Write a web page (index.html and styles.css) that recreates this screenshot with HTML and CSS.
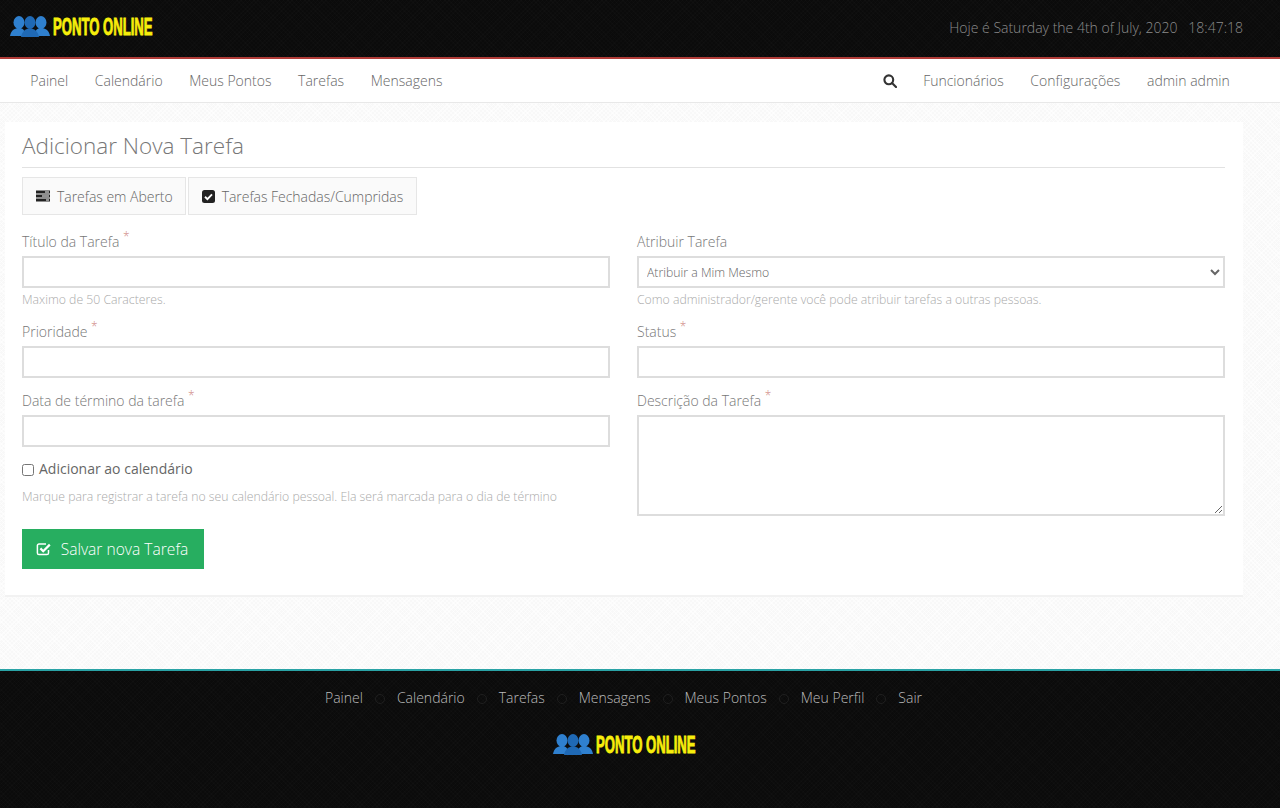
FILE: index.html
```html
<!DOCTYPE html>
<html>
<head>
  <meta charset="utf-8">
  <title>Ponto Online</title>
  <link rel="stylesheet" href="styles.css">
</head>
<body>
  <div class="topbar">
    <a class="logo" href="#">
      <svg class="logo-icon" viewBox="0 0 40 22" width="40" height="22">
        <g fill="#2f80cf">
          <ellipse cx="9" cy="6.5" rx="5.5" ry="6.5"/>
          <ellipse cx="31" cy="6.5" rx="5.5" ry="6.5"/>
          <path d="M0 20 C1 14 5 12 9 12 C13 12 15 14 15 20 Z"/>
          <path d="M25 20 C25 14 27 12 31 12 C35 12 39 14 40 20 Z"/>
        </g>
        <g fill="#1f69b5">
          <ellipse cx="20" cy="6.5" rx="5.5" ry="6.5"/>
          <path d="M11 21 C12 15 16 12.5 20 12.5 C24 12.5 28 15 29 21 Z"/>
        </g>
      </svg>
      <span class="logo-text">PONTO ONLINE</span>
    </a>
    <div class="clock">Hoje é Saturday the 4th of July, 2020 &nbsp; 18:47:18</div>
  </div>

  <div class="navbar">
    <div class="nav-links">
      <a href="#">Painel</a>
      <a href="#">Calendário</a>
      <a href="#">Meus Pontos</a>
      <a href="#">Tarefas</a>
      <a href="#">Mensagens</a>
    </div>
    <div class="nav-links">
      <a href="#" class="nav-search">
        <svg viewBox="0 0 14 14" width="14" height="14" fill="none" stroke="#333" stroke-width="2.1">
          <circle cx="5.8" cy="5.8" r="4.4"/>
          <path d="M9 9l4 4" stroke-linecap="round"/>
        </svg>
      </a>
      <a href="#">Funcionários</a>
      <a href="#">Configurações</a>
      <a href="#">admin admin</a>
    </div>
  </div>

  <div class="main">
    <div class="card">
      <h1 class="card-title">Adicionar Nova Tarefa</h1>

      <div class="tabs">
        <a class="tab" href="#">
          <svg viewBox="0 0 14 12" width="14" height="12" fill="#222">
            <rect x="0" y="0.5" width="14" height="3"/>
            <rect x="0" y="4.5" width="14" height="3"/>
            <rect x="0" y="8.5" width="14" height="3"/>
            <rect x="9" y="1.5" width="4" height="1" fill="#fff"/>
            <rect x="6" y="5.5" width="7" height="1" fill="#fff"/>
            <rect x="10" y="9.5" width="3" height="1" fill="#fff"/>
          </svg>
          Tarefas em Aberto
        </a>
        <a class="tab" href="#">
          <svg viewBox="0 0 13 13" width="13" height="13">
            <rect width="13" height="13" rx="2.5" fill="#222"/>
            <path d="M3 6.8l2.4 2.3L10 4.4" fill="none" stroke="#fff" stroke-width="1.9"/>
          </svg>
          Tarefas Fechadas/Cumpridas
        </a>
      </div>

      <form class="form-grid">
        <div class="form-col">
          <div class="field field-first">
            <label>Título da Tarefa <sup>*</sup></label>
            <input type="text">
            <p class="help">Maximo de 50 Caracteres.</p>
          </div>
          <div class="field">
            <label>Prioridade <sup>*</sup></label>
            <input type="text">
          </div>
          <div class="field">
            <label>Data de término da tarefa <sup>*</sup></label>
            <input type="text">
          </div>
          <div class="check-row">
            <input type="checkbox" id="addCal">
            <label for="addCal">Adicionar ao calendário</label>
          </div>
          <p class="help">Marque para registrar a tarefa no seu calendário pessoal. Ela será marcada para o dia de término</p>
          <button class="btn-save" type="button">
            <svg viewBox="0 0 16 14" width="16" height="14" fill="none" stroke="#fff">
              <path d="M12.5 8v3a1.6 1.6 0 0 1-1.6 1.6H3A1.6 1.6 0 0 1 1.4 11V3.6A1.6 1.6 0 0 1 3 2h7" stroke-width="1.5"/>
              <path d="M4.4 6.4l2.8 2.8 6.6-6.6" stroke-width="2.2"/>
            </svg>
            Salvar nova Tarefa
          </button>
        </div>
        <div class="form-col">
          <div class="field field-first">
            <label class="label-plain">Atribuir Tarefa</label>
            <select><option>Atribuir a Mim Mesmo</option></select>
            <p class="help">Como administrador/gerente você pode atribuir tarefas a outras pessoas.</p>
          </div>
          <div class="field">
            <label>Status <sup>*</sup></label>
            <input type="text">
          </div>
          <div class="field">
            <label>Descrição da Tarefa <sup>*</sup></label>
            <textarea></textarea>
          </div>
        </div>
      </form>
    </div>
  </div>

  <div class="footer">
    <div class="footer-links">
      <a href="#">Painel</a><i></i>
      <a href="#">Calendário</a><i></i>
      <a href="#">Tarefas</a><i></i>
      <a href="#">Mensagens</a><i></i>
      <a href="#">Meus Pontos</a><i></i>
      <a href="#">Meu Perfil</a><i></i>
      <a href="#">Sair</a>
    </div>
    <a class="logo footer-logo" href="#">
      <svg class="logo-icon" viewBox="0 0 40 22" width="40" height="22">
        <g fill="#2f80cf">
          <ellipse cx="9" cy="6.5" rx="5.5" ry="6.5"/>
          <ellipse cx="31" cy="6.5" rx="5.5" ry="6.5"/>
          <path d="M0 20 C1 14 5 12 9 12 C13 12 15 14 15 20 Z"/>
          <path d="M25 20 C25 14 27 12 31 12 C35 12 39 14 40 20 Z"/>
        </g>
        <g fill="#1f69b5">
          <ellipse cx="20" cy="6.5" rx="5.5" ry="6.5"/>
          <path d="M11 21 C12 15 16 12.5 20 12.5 C24 12.5 28 15 29 21 Z"/>
        </g>
      </svg>
      <span class="logo-text">PONTO ONLINE</span>
    </a>
  </div>
</body>
</html>
```

FILE: styles.css
```css
* {
  box-sizing: border-box;
}

body {
  margin: 0;
  font-family: 'Open Sans', 'Liberation Sans', sans-serif;
  font-weight: 300;
  font-size: 14px;
  color: #666;
  background-color: #f8f8f8;
  background-image: repeating-linear-gradient(45deg, rgba(255,255,255,0.6) 0, rgba(255,255,255,0.6) 1px, transparent 1px, transparent 3px), repeating-linear-gradient(-45deg, rgba(255,255,255,0.6) 0, rgba(255,255,255,0.6) 1px, transparent 1px, transparent 3px);
  height: 808px;
  overflow: hidden;
}

a {
  text-decoration: none;
  color: inherit;
}

.topbar {
  height: 59px;
  padding: 0 37px 3px 10px;
  display: flex;
  align-items: center;
  justify-content: space-between;
  background-color: #0b0b0b;
  background-image: repeating-linear-gradient(45deg, rgba(255,255,255,0.012) 0, rgba(255,255,255,0.012) 1px, transparent 1px, transparent 3px), repeating-linear-gradient(-45deg, rgba(255,255,255,0.012) 0, rgba(255,255,255,0.012) 1px, transparent 1px, transparent 3px);
  border-bottom: 2px solid #b13c38;
}

.logo {
  display: flex;
  align-items: center;
}

.logo-icon {
  display: block;
}

.logo-text {
  margin-left: 3px;
  width: 101px;
  font-family: 'Liberation Sans', sans-serif;
  font-size: 23px;
  font-weight: 700;
  line-height: 24px;
  white-space: nowrap;
  color: #f7ee0b;
  -webkit-text-stroke: 0.9px #f7ee0b;
  transform: scaleX(0.57);
  transform-origin: left center;
}

.clock {
  font-size: 14px;
  color: #8b8b8b;
}

.navbar {
  height: 44px;
  padding: 0 37px 0 17px;
  display: flex;
  align-items: center;
  justify-content: space-between;
  background: #fff;
  border-bottom: 1px solid #e8e8e8;
}

.nav-links {
  display: flex;
  align-items: center;
}

.nav-links a {
  padding: 0 13.3px;
  font-size: 14px;
  color: #666;
}

.nav-links .nav-search {
  padding: 0 13px;
  display: flex;
}

.main {
  padding: 19px 37px 0 5px;
  height: 566px;
}

.card {
  height: 475px;
  padding: 0 18px 0 17px;
  background: #fff;
  border-bottom: 2px solid #f2f2f2;
}

.card-title {
  margin: 0;
  padding: 7px 0 5px;
  height: 46px;
  font-size: 22.5px;
  font-weight: 300;
  line-height: 33px;
  color: #777;
  border-bottom: 1px solid #e2e2e2;
}

.tabs {
  margin-top: 9px;
  display: flex;
  gap: 2px;
}

.tab {
  height: 38px;
  padding: 0 12px 0 13px;
  display: flex;
  align-items: center;
  gap: 7px;
  background: #fafafa;
  border: 1px solid #e6e6e6;
  color: #666;
  letter-spacing: -0.03px;
}

.tab + .tab {
  padding-right: 13px;
}

.form-grid {
  display: grid;
  grid-template-columns: 588px 588px;
  column-gap: 27px;
}

.field {
  margin-top: 11px;
}

.field + .field + .field {
  margin-top: 10px;
}

.field-first {
  margin-top: 14px;
}

.field label {
  display: block;
  height: 27px;
  line-height: 26px;
  color: #777;
}

.field sup {
  color: #d08a85;
  font-size: 12px;
  line-height: 0;
}

.field input,
.field select,
.field textarea {
  display: block;
  width: 100%;
  height: 32px;
  padding: 0 4px;
  background: #fff;
  border: 2px solid #ddd;
  border-radius: 0;
  outline: none;
  font-family: inherit;
  font-weight: 300;
  font-size: 12.25px;
  color: #666;
}

.field textarea {
  height: 101px;
}

.help {
  margin: 3px 0 0;
  font-size: 12.25px;
  line-height: 17px;
  color: #aaa;
}

.check-row {
  margin-top: 11px;
  display: flex;
  align-items: center;
  gap: 5px;
  height: 20px;
  color: #666;
  font-weight: 400;
}

.check-row input {
  margin: 3px 0 0;
  width: 12px;
  height: 12px;
}

.check-row + .help {
  margin-top: 10px;
}

.btn-save {
  margin-top: 24px;
  height: 40px;
  width: 182px;
  padding: 0 2px 0 0;
  display: flex;
  align-items: center;
  justify-content: center;
  gap: 9px;
  background: #27ae60;
  border: none;
  color: #fff;
  font-family: inherit;
  font-size: 15.6px;
  font-weight: 300;
}

.footer {
  height: 139px;
  background-color: #0b0b0b;
  background-image: repeating-linear-gradient(45deg, rgba(255,255,255,0.012) 0, rgba(255,255,255,0.012) 1px, transparent 1px, transparent 3px), repeating-linear-gradient(-45deg, rgba(255,255,255,0.012) 0, rgba(255,255,255,0.012) 1px, transparent 1px, transparent 3px);
  border-top: 2px solid #2aa3a6;
}

.footer-links {
  padding: 15px 0 0 325px;
  display: flex;
  align-items: center;
  color: #bbb;
  height: 38px;
}

.footer-links i {
  width: 10px;
  height: 10px;
  margin: 3px 12px 0;
  border: 1px solid #1f1f1f;
  border-radius: 50%;
}

.footer-logo {
  margin: 24px 0 0 553px;
}
```
